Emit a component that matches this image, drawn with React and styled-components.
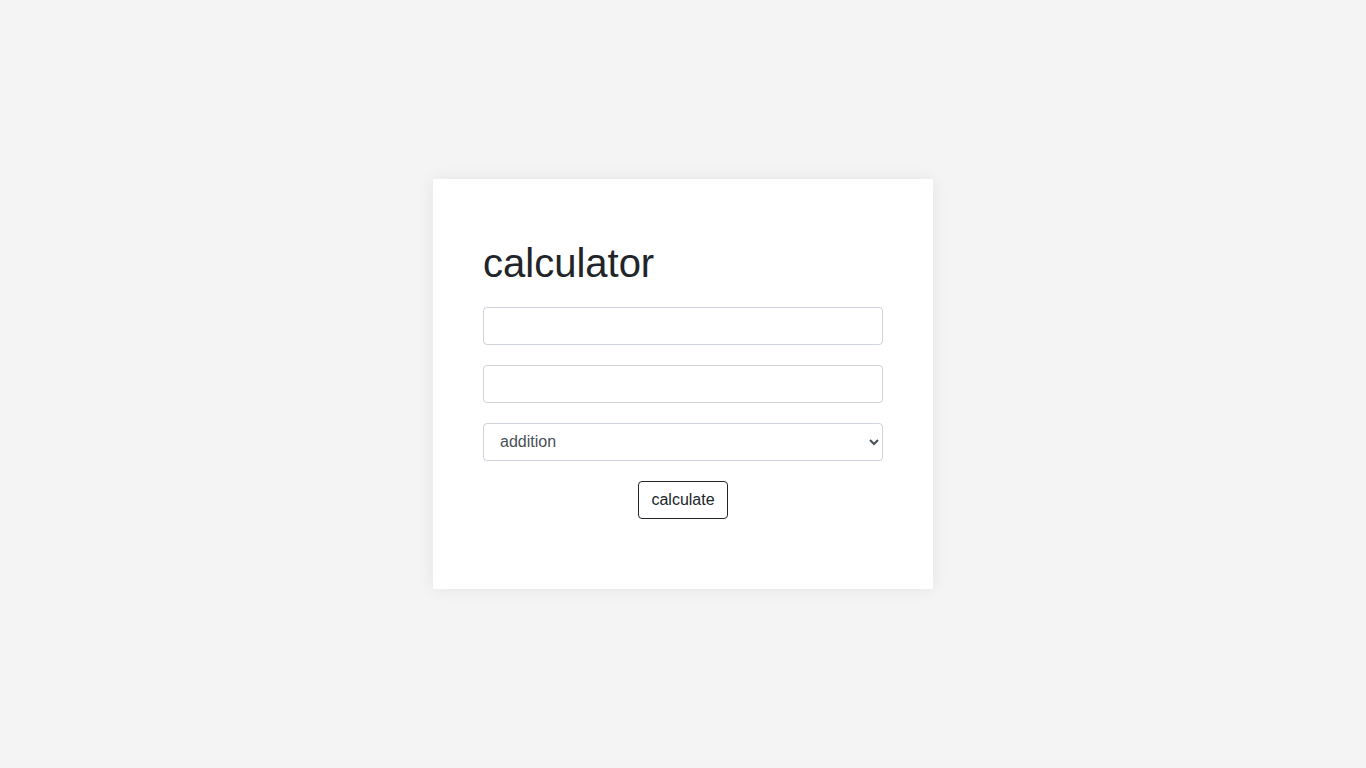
import React, { useState } from 'react';
import styled, { createGlobalStyle } from 'styled-components';

const GlobalStyle = createGlobalStyle`
    * {
        box-sizing: border-box;
    }
    html, body {
        margin: 0;
        padding: 0;
        background: #f4f4f4;
        font-family: "Liberation Sans", Arial, sans-serif;
        color: #212529;
    }
`;

const Page = styled.div`
    min-height: 100vh;
    display: flex;
    align-items: center;
    justify-content: center;
`;

const Card = styled.div`
    width: 500px;
    height: 410px;
    padding: 60px 50px 50px;
    background: #fff;
    box-shadow: 0 0 16px rgba(0, 0, 0, 0.07);
`;

const Title = styled.h1`
    margin: 0 0 20px;
    font-size: 40px;
    font-weight: 400;
    line-height: 48px;
    color: #212529;
`;

const Field = styled.input`
    display: block;
    width: 100%;
    height: 38px;
    margin-bottom: 20px;
    padding: 6px 12px;
    font: inherit;
    font-size: 16px;
    color: #495057;
    background: #fff;
    border: 1px solid #ced4da;
    border-radius: 4px;
    outline: none;
`;

const Select = styled.select`
    display: block;
    width: 100%;
    height: 38px;
    margin-bottom: 20px;
    padding: 5px 12px 7px;
    font: inherit;
    font-size: 16px;
    color: #495057;
    background: #fff;
    border: 1px solid #ced4da;
    border-radius: 4px;
    outline: none;
`;

const Actions = styled.div`
    display: flex;
    justify-content: center;
`;

const Button = styled.button`
    height: 38px;
    padding: 6px 12px;
    font: inherit;
    font-size: 16px;
    color: #212529;
    background: #fff;
    border: 1px solid #212529;
    border-radius: 4px;
    cursor: pointer;
`;

const App = () => {
    const [a, setA] = useState('');
    const [b, setB] = useState('');
    const [op, setOp] = useState('addition');

    return (
        <>
            <GlobalStyle />
            <Page>
                <Card>
                    <Title>calculator</Title>
                    <Field type="number" value={a} onChange={e => setA(e.target.value)} />
                    <Field type="number" value={b} onChange={e => setB(e.target.value)} />
                    <Select value={op} onChange={e => setOp(e.target.value)}>
                        <option value="addition">addition</option>
                        <option value="subtraction">subtraction</option>
                        <option value="multiplication">multiplication</option>
                        <option value="division">division</option>
                    </Select>
                    <Actions>
                        <Button>calculate</Button>
                    </Actions>
                </Card>
            </Page>
        </>
    );
};

export default App;
